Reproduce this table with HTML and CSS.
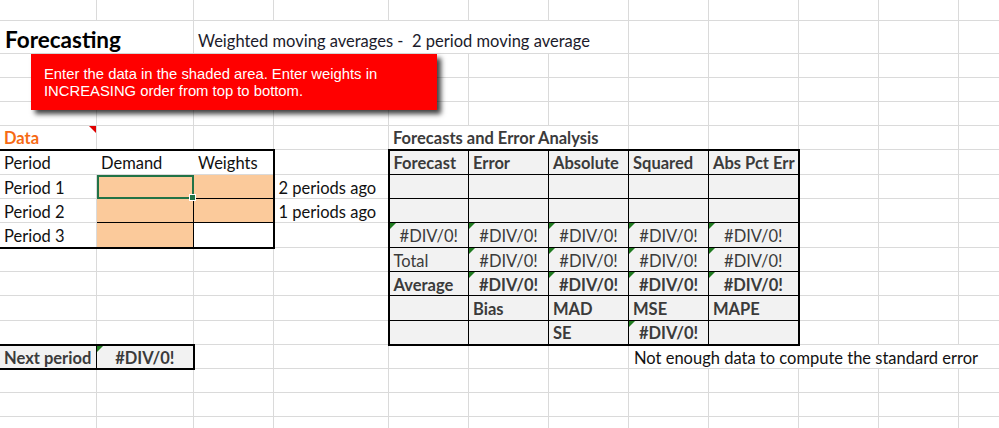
FILE: index.html
```html
<!DOCTYPE html>
<html>
<head>
<meta charset="utf-8">
<link rel="stylesheet" href="styles.css">
</head>
<body>
<div class="sheet">
<table class="grid">
<colgroup>
<col class="cA"><col class="cB"><col class="cC"><col class="cD"><col class="cE"><col class="cF"><col class="cG"><col class="cH"><col class="cI"><col class="cJ"><col class="cK"><col class="cL">
</colgroup>
<tr class="r1"><td></td><td></td><td></td><td></td><td></td><td></td><td></td><td></td><td></td><td></td><td></td><td></td></tr>
<tr class="r2"><td colspan="2" class="title">Forecasting</td><td colspan="5" class="subtitle">Weighted moving averages -&nbsp; 2 period moving average</td><td></td><td></td><td></td><td></td><td></td></tr>
<tr><td></td><td></td><td></td><td></td><td></td><td></td><td></td><td></td><td></td><td></td><td></td><td></td></tr>
<tr><td></td><td></td><td></td><td></td><td></td><td></td><td></td><td></td><td></td><td></td><td></td><td></td></tr>
<tr><td></td><td></td><td></td><td></td><td></td><td></td><td></td><td></td><td></td><td></td><td></td><td></td></tr>
<tr><td class="data comment">Data</td><td></td><td></td><td></td><td colspan="3" class="section">Forecasts and Error Analysis</td><td></td><td></td><td></td><td></td><td></td></tr>
<tr class="tall"><td class="hd tt">Period</td><td class="hd tt">Demand</td><td class="hd tt tr">Weights</td><td></td>
<td class="ft tt tl b">Forecast</td><td class="ft tt b">Error</td><td class="ft tt b">Absolute</td><td class="ft tt b">Squared</td><td class="ft tt tr b">Abs Pct Err</td><td></td><td></td><td></td></tr>
<tr><td>Period 1</td><td class="inp sel">&nbsp;</td><td class="inp tr"></td><td class="note">2 periods ago</td>
<td class="ft tl"></td><td class="ft"></td><td class="ft"></td><td class="ft"></td><td class="ft tr"></td><td></td><td></td><td></td></tr>
<tr><td>Period 2</td><td class="inp"></td><td class="inp tr"></td><td class="note">1 periods ago</td>
<td class="ft tl"></td><td class="ft"></td><td class="ft"></td><td class="ft"></td><td class="ft tr"></td><td></td><td></td><td></td></tr>
<tr class="tall"><td class="tb">Period 3</td><td class="inp tb"></td><td class="box tb tr"></td><td></td>
<td class="ft tl ctr flag">#DIV/0!</td><td class="ft ctr flag">#DIV/0!</td><td class="ft ctr flag">#DIV/0!</td><td class="ft ctr flag">#DIV/0!</td><td class="ft tr ctr flag">#DIV/0!</td><td></td><td></td><td></td></tr>
<tr><td></td><td></td><td></td><td></td>
<td class="ft tl lite">Total</td><td class="ft ctr flag">#DIV/0!</td><td class="ft ctr flag">#DIV/0!</td><td class="ft ctr flag">#DIV/0!</td><td class="ft tr ctr flag">#DIV/0!</td><td></td><td></td><td></td></tr>
<tr><td></td><td></td><td></td><td></td>
<td class="ft tl b">Average</td><td class="ft ctr flag b">#DIV/0!</td><td class="ft ctr flag b">#DIV/0!</td><td class="ft ctr flag b">#DIV/0!</td><td class="ft tr ctr flag b">#DIV/0!</td><td></td><td></td><td></td></tr>
<tr class="tall"><td></td><td></td><td></td><td></td>
<td class="ft tl"></td><td class="ft b">Bias</td><td class="ft b">MAD</td><td class="ft b">MSE</td><td class="ft tr b">MAPE</td><td></td><td></td><td></td></tr>
<tr><td></td><td></td><td></td><td></td>
<td class="ft tl tb"></td><td class="ft tb"></td><td class="ft tb b">SE</td><td class="ft tb ctr flag b">#DIV/0!</td><td class="ft tr tb"></td><td></td><td></td><td></td></tr>
<tr><td class="nx tt tb b">Next period</td><td class="nx tt tb tr ctr flag b">#DIV/0!</td><td></td><td></td><td></td><td></td><td></td><td colspan="5" class="msg">Not enough data to compute the standard error</td></tr>
<tr><td></td><td></td><td></td><td></td><td></td><td></td><td></td><td></td><td></td><td></td><td></td><td></td></tr>
<tr><td></td><td></td><td></td><td></td><td></td><td></td><td></td><td></td><td></td><td></td><td></td><td></td></tr>
<tr><td></td><td></td><td></td><td></td><td></td><td></td><td></td><td></td><td></td><td></td><td></td><td></td></tr>
</table>
<div class="callout">Enter the data in the shaded area. Enter weights in INCREASING order from top to bottom.</div>
</div>
</body>
</html>
```

FILE: styles.css
```css
html, body {
  margin: 0;
  padding: 0;
  background: #fff;
  overflow: hidden;
}
.sheet {
  position: relative;
  width: 999px;
  height: 428px;
  overflow: hidden;
}
.grid {
  border-collapse: collapse;
  table-layout: fixed;
  width: 1038px;
  margin-top: -1px;
  margin-left: -1px;
  font-family: Lato, "Open Sans", sans-serif;
  font-size: 16.5px;
  color: #111;
}
.cA { width: 97px; }
.cB { width: 97px; }
.cC { width: 80px; }
.cD { width: 115px; }
.cE, .cF, .cG, .cH { width: 80px; }
.cI { width: 90px; }
.cJ, .cK, .cL { width: 80px; }
.grid tr { height: 24px; }
.grid tr.tall { height: 25px; }
.grid tr.r1 { height: 21px; }
.grid tr.r2 { height: 33px; }
.grid td {
  border: 1px solid #dadada;
  padding: 2px 4px 0;
  white-space: nowrap;
  overflow: visible;
  vertical-align: middle;
  line-height: 18px;
  position: relative;
}
.grid td.title {
  font-weight: 700;
  font-size: 22.5px;
  padding-left: 5px;
  padding-top: 5px;
  color: #000;
}
.grid td.subtitle {
  padding-top: 7px;
  color: #1b1b2b;
}
.data {
  font-weight: 700;
  color: #f66a14;
}
.comment::after {
  content: "";
  position: absolute;
  top: 0;
  right: 0;
  border-top: 7px solid #e00000;
  border-left: 7px solid transparent;
}
.section {
  font-weight: 700;
  color: #3b3b3b;
}
.grid td.hd {
  background: #fff;
  border-left-color: #fff;
  border-right-color: #fff;
}
.grid td.inp {
  background: #fbca9b;
  border: 1px solid #000;
}
.grid td.box {
  border: 1px solid #000;
}
.grid td.sel {
  outline: 2px solid #217346;
  outline-offset: -2px;
}
.grid td.sel::after {
  content: "";
  position: absolute;
  right: -3px;
  bottom: -3px;
  width: 5px;
  height: 5px;
  background: #217346;
  border: 1px solid #fff;
  z-index: 2;
}
.grid td.note { padding-left: 4px; }
.grid td.ft {
  background: #f2f2f2;
  border: 1px solid #000;
  color: #3b3b3b;
}
.grid td.nx {
  background: #f2f2f2;
  border: 1px solid #000;
  color: #3b3b3b;
}
.grid td.tt { border-top: 2px solid #000; }
.grid td.tb { border-bottom: 2px solid #000; }
.grid td.tl { border-left: 2px solid #000; }
.grid td.tr { border-right: 2px solid #000; }
.b { font-weight: 700; }
.ctr { text-align: center; }
.lite { color: #555; }
.flag::before {
  content: "";
  position: absolute;
  top: 0;
  left: 0;
  border-top: 6px solid #1f7a1f;
  border-right: 6px solid transparent;
}
.grid td.msg { padding-left: 5px; color: #111; }
.callout {
  position: absolute;
  left: 31px;
  top: 54px;
  width: 406px;
  height: 56px;
  box-sizing: border-box;
  background: #ff0000;
  color: #fff;
  font-family: "Liberation Sans", Arial, sans-serif;
  font-size: 14.8px;
  line-height: 17px;
  padding: 12px 10px 0 13px;
  box-shadow: 4px 4px 5px rgba(0,0,0,0.75);
}
```
